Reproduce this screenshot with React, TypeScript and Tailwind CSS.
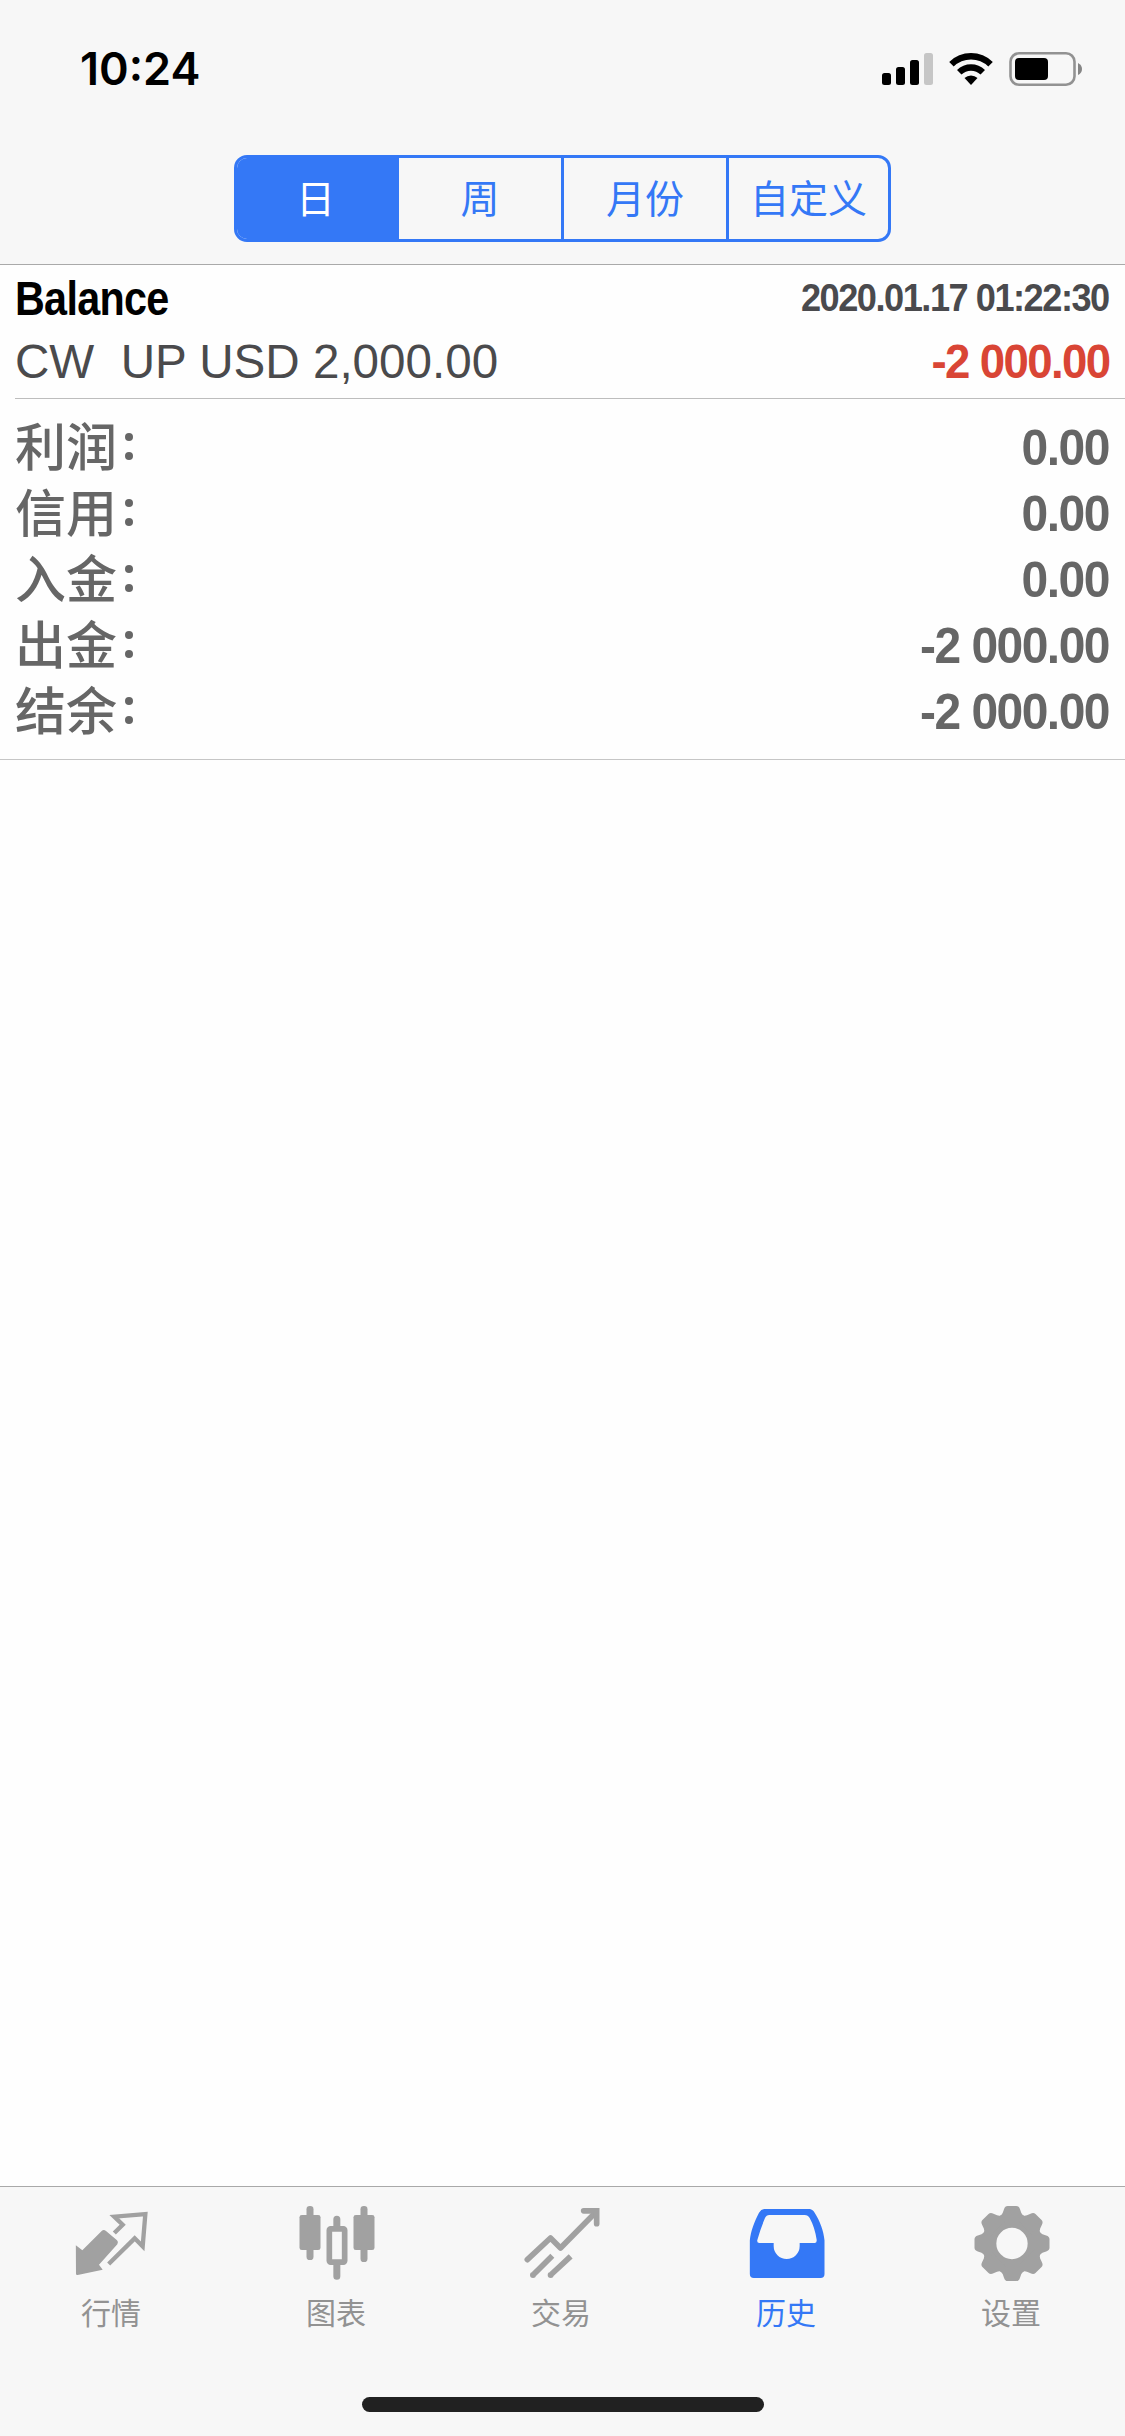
import type { ReactNode } from 'react';
import { clsx } from 'clsx';

const periods = [
  { label: '日', width: 'w-[162px]' },
  { label: '周', width: 'w-[165px]' },
  { label: '月份', width: 'w-[165px]' },
  { label: '自定义', width: 'w-[159px]' },
];

const totals = [
  { label: '利润', value: '0.00' },
  { label: '信用', value: '0.00' },
  { label: '入金', value: '0.00' },
  { label: '出金', value: '-2 000.00' },
  { label: '结余', value: '-2 000.00' },
];

// One tooth of the gear, repeated every 45 degrees
const gearTeeth = [0, 45, 90, 135, 180, 225, 270, 315];

function TabIcon({ children }: { children: ReactNode }) {
  return (
    <svg viewBox="0 0 240 240" className="w-20 h-20" fill="none">
      {children}
    </svg>
  );
}

function QuotesIcon() {
  return (
    <TabIcon>
      <path
        d="M8.5 127 L28 142 L86 84 Q92 78 99 84 L132 112 Q138 118 133 124 L78 185 L89 200 L14 216 Q9 217 9 212Z"
        fill="currentColor"
      />
      <path d="M124 90 L149 65 L124 41 L217 33.5 L209 130 L185 106 L107 183" stroke="currentColor" strokeWidth="13" />
    </TabIcon>
  );
}

function ChartIcon() {
  return (
    <TabIcon>
      <g fill="currentColor">
        <rect x="25.5" y="9" width="21" height="162" rx="10" />
        <rect x="4.5" y="36" width="63" height="105" rx="7" />
        <rect x="187.5" y="9" width="21" height="168" rx="10" />
        <rect x="166.5" y="36" width="63" height="105" rx="7" />
        <path d="M106 69 V49 a10.5 10.5 0 0 1 21 0 V69z M106 186 V220 a10.5 10.5 0 0 0 21 0 V186z" />
      </g>
      <rect x="94" y="77.5" width="46" height="100" rx="4" stroke="currentColor" strokeWidth="17" />
    </TabIcon>
  );
}

function TradeIcon() {
  return (
    <TabIcon>
      <g stroke="currentColor" strokeWidth="17">
        <path d="M13 170 L82.5 105 L112.5 135 L219 27" strokeLinecap="round" strokeLinejoin="round" />
        <path d="M182 23.5 H221 V62" strokeLinecap="round" />
        <path d="M33 213 L88 158 M86 213 L143 160" />
      </g>
      <circle cx="30" cy="216" r="9" fill="currentColor" />
      <circle cx="83" cy="216" r="9" fill="currentColor" />
    </TabIcon>
  );
}

function HistoryIcon() {
  return (
    <TabIcon>
      <path
        fillRule="evenodd"
        fill="currentColor"
        d="M5.5 112 C8 84 20 54 33 29 Q40 18 50 18 H184 Q193 18 200 29 C216 54 227 84 229.5 112 V213 Q229.5 225 217.5 225 H17.5 Q5.5 225 5.5 213Z
           M64 36 H170 Q180 36 185 45 Q200 72 206 110 Q207 120 201 120 H155 V129 A39 39 0 0 1 77 129 V120 H34 Q26 120 28 111 Q37 78 51 45 Q55 36 64 36Z"
      />
    </TabIcon>
  );
}

function SettingsIcon() {
  return (
    <TabIcon>
      <circle cx="117" cy="121.5" r="67.5" stroke="currentColor" strokeWidth="41" />
      <g fill="currentColor">
        {gearTeeth.map((angle) => (
          <path
            key={angle}
            transform={`rotate(${angle} 117 121.5)`}
            d="M81 60 V38.5 Q86 36 89 30 L93 19 Q96 9 104 9 H130 Q138 9 141 19 L145 30 Q148 36 153 38.5 V60Z"
          />
        ))}
      </g>
    </TabIcon>
  );
}

const tabs = [
  { label: '行情', icon: <QuotesIcon /> },
  { label: '图表', icon: <ChartIcon /> },
  { label: '交易', icon: <TradeIcon /> },
  { label: '历史', icon: <HistoryIcon />, active: true },
  { label: '设置', icon: <SettingsIcon /> },
];

function StatusBar() {
  return (
    <div className="flex items-start justify-between h-[155px] pt-[52px] pl-[80px] pr-[41px]">
      <span className="font-['Inter'] font-semibold text-[45px] leading-[34px] text-black">10:24</span>
      <div className="flex items-start">
        <svg width="52" height="34" viewBox="0 0 52 34">
          <rect x="0" y="21" width="9" height="12" rx="2.5" />
          <rect x="14" y="15" width="9" height="18" rx="2.5" />
          <rect x="28" y="8" width="9" height="25" rx="2.5" />
          <rect x="42" y="1" width="9" height="32" rx="2.5" fill="#c6c6c6" />
        </svg>
        <svg className="ml-[14px]" width="46" height="34" viewBox="0 0 46 34">
          <path d="M1.2 10 A31 31 0 0 1 44.8 10 L40.3 14.6 A24.5 24.5 0 0 0 5.7 14.6Z" />
          <path d="M9 18 A20 20 0 0 1 37 18 L32.5 22.6 A13.6 13.6 0 0 0 13.5 22.6Z" />
          <path d="M16.5 26 A9.5 9.5 0 0 1 29.5 26 L23 33Z" />
        </svg>
        <svg className="ml-[14px]" width="76" height="34" viewBox="0 0 76 34">
          <rect x="2.5" y="1.3" width="64" height="31.4" rx="8.5" fill="none" stroke="#929292" strokeWidth="2.6" />
          <rect x="7" y="6" width="33" height="22" rx="4" />
          <path d="M70 11 Q74 13 74 17 Q74 21 70 23Z" fill="#858585" />
        </svg>
      </div>
    </div>
  );
}

export default function App() {
  return (
    <div className="flex flex-col w-[1125px] h-[2436px] bg-[#fefefe] font-['Liberation_Sans','Noto_Sans_CJK_SC',sans-serif]">
      <header className="h-[265px] bg-[#f7f7f7] border-b border-[#a9a9a9]">
        <StatusBar />
        {/* Period switch */}
        <div className="flex w-[657px] h-[87px] mx-auto rounded-[13px] border-3 border-[#3478f6] overflow-hidden">
          {periods.map((period, i) => (
            <div
              key={period.label}
              className={clsx(
                "flex items-center justify-center pb-[4px] font-['Noto_Sans_CJK_SC',sans-serif] text-[39px] leading-none",
                period.width,
                i === 0 ? 'bg-[#3478f6] text-white pr-[2px]' : 'text-[#3478f6]',
                i < periods.length - 1 && 'border-r-3 border-[#3478f6]',
              )}
            >
              {period.label}
            </div>
          ))}
        </div>
      </header>

      <main className="flex-1">
        {/* Balance operation */}
        <div className="ml-[15px] pr-[16px] h-[134px] border-b border-[#bdbdbd]">
          <div className="flex justify-between h-[66px] pt-[5px] font-bold">
            <span className="inline-block origin-left scale-x-[0.86] text-[48px] leading-[57px] tracking-[-0.8px] text-black">
              Balance
            </span>
            <span className="inline-block origin-right scale-x-[0.928] text-[39px] leading-[56px] tracking-[-1.6px] text-[#4a4a4d]">
              2020.01.17 01:22:30
            </span>
          </div>
          <div className="flex items-baseline justify-between pt-px leading-[60px] text-[47.6px]">
            <span className="whitespace-pre text-[#4a4a4c]">CW  UP USD 2,000.00</span>
            <span className="inline-block origin-right scale-x-[0.96] font-bold text-[47.5px] tracking-[-1.7px] text-[#d94535]">
              -2 000.00
            </span>
          </div>
        </div>

        {/* Totals */}
        <div className="h-[361px] pt-[15px] pl-[15px] pr-[16px] border-b border-[#c6c6c6] text-[#666]">
          {totals.map((row) => (
            <div key={row.label} className="flex justify-between h-[66px]">
              <div className="flex font-['Noto_Sans_CJK_SC',sans-serif] font-medium text-[51px] leading-[61px]">
                {row.label}
                <span className="flex flex-col gap-[11px] pt-[19px] pl-[8px]">
                  <i className="w-2 h-2 rounded-full bg-[#666]" />
                  <i className="w-2 h-2 rounded-full bg-[#666]" />
                </span>
              </div>
              <span className="inline-block origin-right scale-x-[0.95] font-bold text-[50.5px] leading-[67px] tracking-[-1.6px]">
                {row.value}
              </span>
            </div>
          ))}
        </div>
      </main>

      <nav className="h-[250px] bg-[#f7f7f7] border-t border-[#a9a9a9]">
        <div className="flex w-[1125px] h-[210px] pt-[16px]">
          {tabs.map((tab) => (
            <div
              key={tab.label}
              className={clsx('flex flex-1 flex-col items-center', tab.active ? 'text-[#3478f6]' : 'text-[#a1a1a1]')}
            >
              {tab.icon}
              <span
                className={clsx(
                  "mt-[8px] pr-[3px] font-['Noto_Sans_CJK_SC',sans-serif] text-[30px] leading-[40px]",
                  !tab.active && 'text-[#929292]',
                )}
              >
                {tab.label}
              </span>
            </div>
          ))}
        </div>
        <div className="w-[402px] h-[15px] mx-auto rounded-full bg-[#212121]" />
      </nav>
    </div>
  );
}
